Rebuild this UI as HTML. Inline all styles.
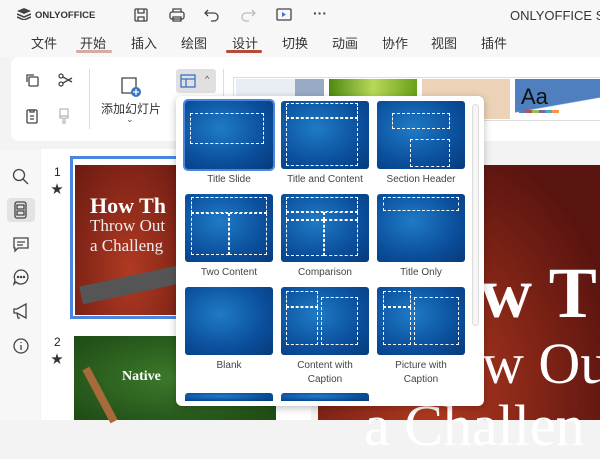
<!DOCTYPE html><html><head><meta charset="utf-8"><style>
*{box-sizing:border-box;margin:0;padding:0}
body{width:600px;height:420px;overflow:hidden;background:#f3f3f3;font-family:"Liberation Sans","Noto Sans CJK SC",sans-serif;position:relative;color:#333}
.a{position:absolute}
.menu span{position:absolute;top:33px;font-size:13px;color:#333}
.th{position:absolute;width:88px;height:68px;border-radius:3px;background:radial-gradient(ellipse at 40% 40%,#1f7bc7,#0b4f9c 60%,#063a7a);overflow:hidden}
.th i{position:absolute;border:1px dashed #fff}
.lb{position:absolute;width:96px;text-align:center;font-size:10px;color:#444;line-height:14px}
.ic{position:absolute;stroke:#444;fill:none;stroke-width:1.3}
</style></head><body>
<div class="a" style="left:0;top:0;width:600px;height:57px;background:#f7f7f7"></div>
<svg class="a" style="left:17px;top:8px" width="14" height="12" viewBox="0 0 14 12"><path d="M7 0L14 3 7 6 0 3Z" fill="#444"/><path d="M0 6l7 3 7-3M0 9l7 3 7-3" stroke="#444" fill="none" stroke-width="1.5"/></svg>
<div class="a" style="left:35px;top:10px;font-size:9.5px;font-weight:bold;color:#333">ONLYOFFICE</div>
<svg class="ic" style="left:133px;top:7px" width="16" height="16"><rect x="2" y="2" width="12" height="12" rx="1"/><path d="M5 2v4h6V2M5 14v-4h6v4"/></svg>
<svg class="ic" style="left:168px;top:7px" width="18" height="16"><rect x="2" y="5" width="14" height="7" rx="2"/><path d="M5 5V2h8v3M5 10h8v4H5z"/></svg>
<svg class="ic" style="left:204px;top:7px" width="16" height="16"><path d="M4 3L1 6l3 3M1 6h9a4 4 0 010 8H7"/></svg>
<svg class="ic" style="left:240px;top:7px;stroke:#bbb" width="16" height="16"><path d="M12 3l3 3-3 3M15 6H6a4 4 0 000 8h3"/></svg>
<svg class="ic" style="left:276px;top:7px" width="16" height="16"><rect x="1" y="2" width="14" height="11" rx="1"/><path d="M6 5v5l4-2.5z" fill="#3a73c9" stroke="none"/></svg>
<div class="a" style="left:313px;top:5px;font-size:14px;font-weight:bold;color:#444">···</div>
<div class="a" style="left:510px;top:8px;font-size:13px;color:#333;white-space:nowrap">ONLYOFFICE Sa</div>
<div class="menu"><span style="left:31px">文件</span><span style="left:80px">开始</span><span style="left:131px">插入</span><span style="left:181px">绘图</span><span style="left:232px">设计</span><span style="left:282px">切换</span><span style="left:332px">动画</span><span style="left:382px">协作</span><span style="left:431px">视图</span><span style="left:481px">插件</span></div>
<div class="a" style="left:76px;top:50px;width:36px;height:3px;background:#d9a9a3;border-radius:2px"></div>
<div class="a" style="left:226px;top:50px;width:36px;height:3px;background:#b34b3a;border-radius:2px"></div>
<div class="a" style="left:11px;top:57px;width:600px;height:84px;background:#fff;border-radius:8px"></div>
<svg class="ic" style="left:24px;top:72px" width="16" height="16"><rect x="5" y="5" width="9" height="9" rx="1"/><path d="M3 10V3h7"/></svg>
<svg class="ic" style="left:57px;top:72px" width="16" height="16"><circle cx="4" cy="4" r="2"/><circle cx="4" cy="12" r="2"/><path d="M6 5l9 5M6 11l9-5"/></svg>
<svg class="ic" style="left:24px;top:108px" width="16" height="16"><rect x="3" y="2" width="10" height="13" rx="1"/><path d="M6 2h4v2H6zM6 8h4M6 11h4"/></svg>
<svg class="ic" style="left:56px;top:108px;stroke:#bbb" width="16" height="16"><rect x="4" y="1" width="8" height="7"/><path d="M4 8h8v2H9v5H7v-5H4z"/></svg>
<div class="a" style="left:89px;top:69px;width:1px;height:60px;background:#ddd"></div>
<svg class="ic" style="left:120px;top:76px" width="22" height="22"><path d="M12 17H2V2h14v10"/><circle cx="16" cy="16" r="5" fill="#3a73c9" stroke="none"/><path d="M16 13v6M13 16h6" stroke="#fff"/></svg>
<div class="a" style="left:101px;top:100px;font-size:12px;color:#333">添加幻灯片</div>
<div class="a" style="left:126px;top:114px;font-size:9px;color:#555">⌄</div>
<div class="a" style="left:176px;top:69px;width:40px;height:24px;background:#e0e0e0;border-radius:3px"></div>
<svg class="a" style="left:180px;top:74px" width="16" height="14"><rect x="1" y="1" width="14" height="12" fill="none" stroke="#3a73c9" stroke-width="1.3"/><path d="M1 5h14M6 5v8" stroke="#3a73c9" stroke-width="1.3"/></svg>
<div class="a" style="left:205px;top:74px;font-size:9px;color:#555">^</div>
<div class="a" style="left:223px;top:69px;width:1px;height:60px;background:#ddd"></div>
<div class="a" style="left:233px;top:77px;width:370px;height:44px;border:1px solid #ddd"></div>
<div class="a" style="left:236px;top:79px;width:88px;height:40px;background:linear-gradient(90deg,#e8eef4 67%,#99aac4 67%)"></div>
<div class="a" style="left:329px;top:79px;width:88px;height:40px;background:linear-gradient(90deg,#4d8a10,#b8d85a,#6aa018)"></div>
<div class="a" style="left:422px;top:79px;width:88px;height:40px;background:#ecd3b8"></div>
<div class="a" style="left:515px;top:79px;width:85px;height:40px;background:linear-gradient(170deg,#4f7fbf 60%,#fff 62%)"></div>
<div class="a" style="left:521px;top:84px;font-size:22px;color:#111">Aa</div>
<div class="a" style="left:519px;top:110px;width:40px;height:3px;background:linear-gradient(90deg,#4f7fbf 16%,#c0504d 16% 33%,#9bbb59 33% 50%,#8064a2 50% 66%,#4bacc6 66% 83%,#f79646 83%)"></div>
<!-- left sidebar -->
<div class="a" style="left:0;top:150px;width:40px;height:270px;background:#f7f7f7"></div>
<svg class="ic" style="left:12px;top:168px" width="18" height="18"><circle cx="7" cy="7" r="5.5"/><path d="M11 11l5 5"/></svg>
<div class="a" style="left:7px;top:198px;width:28px;height:24px;background:#e3e3e3;border-radius:4px"></div>
<svg class="ic" style="left:13px;top:201px" width="16" height="18"><rect x="2" y="1" width="11" height="16" rx="2"/><path d="M4 4h7v4H4zM4 10h7v4H4z"/></svg>
<svg class="ic" style="left:12px;top:236px" width="18" height="18"><path d="M2 2h14v10H6l-3 3v-3H2z"/><path d="M5 6h8M5 9h6"/></svg>
<svg class="ic" style="left:12px;top:268px" width="18" height="18"><path d="M9 2a7 7 0 11-5 12l-2 2 1-4A7 7 0 019 2z"/><circle cx="6" cy="9" r=".6"/><circle cx="9" cy="9" r=".6"/><circle cx="12" cy="9" r=".6"/></svg>
<svg class="ic" style="left:12px;top:302px" width="18" height="18"><path d="M2 7h3l9-5v14l-9-5H2zM5 11l1 5h2"/></svg>
<svg class="ic" style="left:12px;top:337px" width="18" height="18"><circle cx="9" cy="9" r="7"/><path d="M9 8v5M9 5v1"/></svg>
<!-- slide panel -->
<div class="a" style="left:41px;top:149px;width:270px;height:271px;background:#fff"></div>
<div class="a" style="left:54px;top:165px;font-size:12px;color:#222">1</div>
<div class="a" style="left:51px;top:180px;font-size:12px">★</div>
<div class="a" style="left:54px;top:335px;font-size:12px;color:#222">2</div>
<div class="a" style="left:51px;top:350px;font-size:12px">★</div>
<div class="a" style="left:70px;top:156px;width:120px;height:163px;border:3px solid #4a86e0"></div>
<div class="a" style="left:75px;top:165px;width:110px;height:150px;background:radial-gradient(ellipse at 50% 70%,#b03a22,#6b1a12)"></div>
<div class="a" style="left:90px;top:193px;font-family:'Liberation Serif',serif;font-weight:bold;font-size:22px;color:#fff;white-space:nowrap">How Th</div>
<div class="a" style="left:90px;top:216px;font-family:'Liberation Serif',serif;font-size:17px;color:#eee;line-height:20px;white-space:nowrap">Throw Out<br>a Challeng</div>
<div class="a" style="left:80px;top:276px;width:100px;height:18px;background:#555;transform:rotate(-12deg)"></div>
<div class="a" style="left:74px;top:336px;width:202px;height:84px;background:radial-gradient(ellipse,#3d7a2a,#1e4a16)"></div>
<div class="a" style="left:122px;top:369px;font-family:'Liberation Serif',serif;font-weight:bold;font-size:14px;color:#fff">Native</div>
<div class="a" style="left:96px;top:365px;width:8px;height:60px;background:#a86a3a;transform:rotate(-28deg)"></div>
<!-- main slide -->
<div class="a" style="left:318px;top:165px;width:282px;height:255px;background:radial-gradient(ellipse at 40% 90%,#b43a20,#5a140f 80%)"></div>
<div class="a" style="left:480px;top:252px;font-family:'Liberation Serif',serif;font-weight:bold;font-size:72px;color:#fff;white-space:nowrap">w T</div>
<div class="a" style="left:482px;top:330px;font-family:'Liberation Serif',serif;font-size:58px;color:#fff;white-space:nowrap">w Ou</div>
<div class="a" style="left:364px;top:392px;font-family:'Liberation Serif',serif;font-size:58px;color:#fff;white-space:nowrap">a Challen</div>
<!-- dropdown -->
<div class="a" style="left:176px;top:96px;width:308px;height:310px;background:#fff;border-radius:6px;box-shadow:0 2px 8px rgba(0,0,0,.25)"></div>
<div class="a" style="left:472px;top:104px;width:7px;height:222px;border:1px solid #ddd;border-radius:4px;background:#f6f6f6"></div>
<div class="th" style="left:185px;top:101px;box-shadow:0 0 0 2px #4a86e0"><i style="left:5px;top:12px;width:74px;height:31px"></i></div>
<div class="th" style="left:281px;top:101px"><i style="left:5px;top:2px;width:72px;height:15px"></i><i style="left:5px;top:17px;width:72px;height:48px"></i></div>
<div class="th" style="left:377px;top:101px"><i style="left:15px;top:12px;width:58px;height:16px"></i><i style="left:33px;top:38px;width:40px;height:28px"></i></div>
<div class="lb" style="left:181px;top:173px">Title Slide</div>
<div class="lb" style="left:277px;top:173px">Title and Content</div>
<div class="lb" style="left:373px;top:173px">Section Header</div>
<div class="th" style="left:185px;top:194px"><i style="left:6px;top:3px;width:76px;height:16px"></i><i style="left:6px;top:19px;width:38px;height:42px"></i><i style="left:44px;top:19px;width:38px;height:42px"></i></div>
<div class="th" style="left:281px;top:194px"><i style="left:5px;top:3px;width:72px;height:15px"></i><i style="left:5px;top:18px;width:38px;height:8px"></i><i style="left:43px;top:18px;width:34px;height:8px"></i><i style="left:5px;top:26px;width:38px;height:36px"></i><i style="left:43px;top:26px;width:34px;height:36px"></i></div>
<div class="th" style="left:377px;top:194px"><i style="left:6px;top:3px;width:76px;height:14px"></i></div>
<div class="lb" style="left:181px;top:266px">Two Content</div>
<div class="lb" style="left:277px;top:266px">Comparison</div>
<div class="lb" style="left:373px;top:266px">Title Only</div>
<div class="th" style="left:185px;top:287px"></div>
<div class="th" style="left:281px;top:287px"><i style="left:5px;top:4px;width:32px;height:16px"></i><i style="left:5px;top:20px;width:32px;height:38px"></i><i style="left:40px;top:10px;width:37px;height:48px"></i></div>
<div class="th" style="left:377px;top:287px"><i style="left:6px;top:4px;width:28px;height:16px"></i><i style="left:6px;top:20px;width:28px;height:38px"></i><i style="left:37px;top:10px;width:45px;height:48px"></i></div>
<div class="lb" style="left:181px;top:359px">Blank</div>
<div class="lb" style="left:277px;top:359px">Content with<br>Caption</div>
<div class="lb" style="left:373px;top:359px">Picture with<br>Caption</div>
<div class="th" style="left:185px;top:393px;height:8px;border-radius:3px 3px 0 0"></div>
<div class="th" style="left:281px;top:393px;height:8px;border-radius:3px 3px 0 0"></div>
</body></html>
